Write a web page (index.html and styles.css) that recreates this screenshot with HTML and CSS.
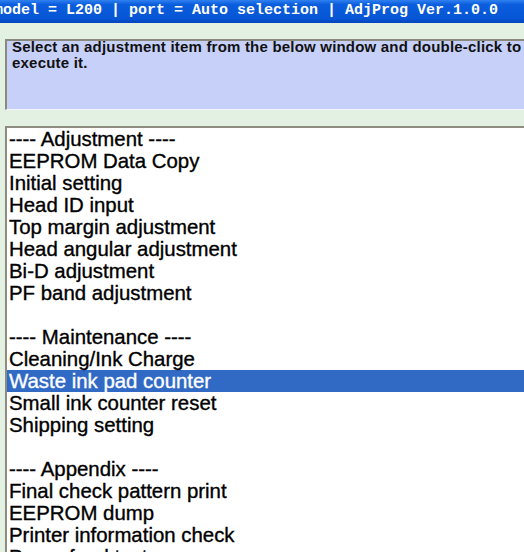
FILE: index.html
```html
<!doctype html>
<html lang="en">
  <head>
    <meta charset="UTF-8" />
    <title>AdjProg</title>
    <link rel="stylesheet" href="styles.css">
  </head>
  <body>
    <div class="titlebar">model = L200 | port = Auto selection | AdjProg Ver.1.0.0</div>

    <div class="content">
      <div class="info">
        <p>
          Select an adjustment item from the below window and double-click to<br>
          execute it.
        </p>
      </div>

      <ul class="item-list">
        <li>---- Adjustment ----</li>
        <li>EEPROM Data Copy</li>
        <li>Initial setting</li>
        <li>Head ID input</li>
        <li>Top margin adjustment</li>
        <li>Head angular adjustment</li>
        <li>Bi-D adjustment</li>
        <li>PF band adjustment</li>
        <li class="blank"></li>
        <li>---- Maintenance ----</li>
        <li>Cleaning/Ink Charge</li>
        <li class="selected">Waste ink pad counter</li>
        <li>Small ink counter reset</li>
        <li>Shipping setting</li>
        <li class="blank"></li>
        <li>---- Appendix ----</li>
        <li>Final check pattern print</li>
        <li>EEPROM dump</li>
        <li>Printer information check</li>
        <li>Paper feed test</li>
      </ul>
    </div>
  </body>
</html>
```

FILE: styles.css
```css
* {
  margin: 0;
  padding: 0;
  box-sizing: border-box;
}

html,
body {
  width: 524px;
  height: 552px;
  overflow: hidden;
}

body {
  background: #e2f1e2;
  font-family: 'Liberation Sans', Arial, sans-serif;
  color: #000;
}

.titlebar {
  height: 23px;
  background: linear-gradient(#3080f0, #0a5ddc 20%, #0656d6 80%, #0444bc);
  color: #fff;
  font-family: 'Liberation Mono', 'DejaVu Sans Mono', monospace;
  font-weight: bold;
  font-size: 15px;
  line-height: 21px;
  white-space: nowrap;
  text-indent: -6px;
  overflow: hidden;
}

.content {
  padding: 16px 0 0 5px;
}

.info {
  height: 71px;
  margin-right: -20px;
  padding: 0 0 0 5px;
  background: #c6d0f8;
  border-top: 2px solid #8a897e;
  border-left: 2px solid #8a897e;
  border-bottom: 1px solid #f4f6fc;
}

.info p {
  margin-top: -2px;
  font-size: 15px;
  font-weight: bold;
  letter-spacing: 0.2px;
  line-height: 16px;
  white-space: nowrap;
  color: #111;
}

.item-list {
  list-style: none;
  margin-top: 16px;
  margin-right: -20px;
  background: #fff;
  border-top: 2px solid #8e8b80;
  border-left: 2px solid #8e8b80;
}

.item-list li {
  height: 22px;
  padding-left: 2px;
  font-size: 20.4px;
  line-height: 22px;
  white-space: nowrap;
  -webkit-text-stroke: 0.35px currentColor;
}

.item-list li.selected {
  background: #316ac5;
  color: #fff;
}
```
